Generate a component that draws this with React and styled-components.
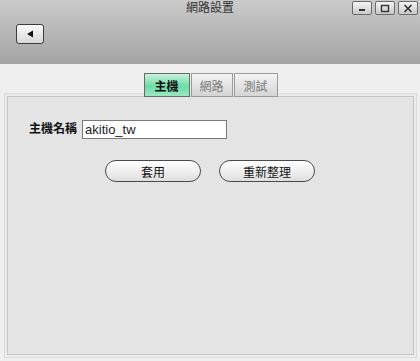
import styled, { createGlobalStyle } from "styled-components";

const Global = createGlobalStyle`
  html, body { margin: 0; padding: 0; background: #efefef; }
  body { font-family: "Liberation Sans", "Noto Sans CJK TC", sans-serif; }
`;

const cjk = `"Liberation Sans", "Noto Sans CJK TC", sans-serif`;

const Window = styled.div`
  width: 420px;
  height: 361px;
  display: flex;
  flex-direction: column;
  background: #efefef;
  overflow: hidden;
`;

const Header = styled.div`
  height: 64px;
  box-sizing: border-box;
  background: linear-gradient(#cbcbcb, #a3a3a3);
  padding: 1px 2px 0 16px;
  display: flex;
  flex-direction: column;
`;

const TitleBar = styled.div`
  display: grid;
  grid-template-columns: 1fr auto 1fr;
  align-items: start;
  height: 23px;
`;

const Title = styled.div`
  grid-column: 2;
  font-family: ${cjk};
  font-size: 12px;
  line-height: 14px;
  color: #333;
  padding-right: 14px;
`;

const Controls = styled.div`
  grid-column: 3;
  justify-self: end;
  display: flex;
  gap: 3px;
`;

const WinBtn = styled.div`
  width: 20px;
  height: 14px;
  box-sizing: border-box;
  border: 1px solid #6a6a6a;
  border-radius: 2px;
  background: linear-gradient(#f4f4f4, #c9c9c9);
  display: flex;
  align-items: center;
  justify-content: center;
`;

const BackBtn = styled.div`
  width: 28px;
  height: 20px;
  box-sizing: border-box;
  border: 1px solid #3c3c3c;
  border-radius: 3px;
  background: linear-gradient(#fafafa, #d8d8d8);
  display: flex;
  align-items: center;
  justify-content: center;
`;

const Body = styled.div`
  flex: 1;
  display: flex;
  flex-direction: column;
  padding: 9px 6px 6px 7px;
`;

const Tabs = styled.div`
  display: flex;
  justify-content: center;
  gap: 1px;
  margin-bottom: -1px;
  position: relative;
  z-index: 1;
`;

const Tab = styled.div`
  height: 24px;
  width: ${(p) => p.$w}px;
  box-sizing: border-box;
  border: 1px solid ${(p) => (p.$active ? "#6a6a6a" : "#9a9a9a")};
  background: ${(p) =>
    p.$active
      ? "linear-gradient(#c9f3dd, #6edba8 55%, #9be8c3)"
      : "linear-gradient(#f4f4f4, #d4d4d4)"};
  font-family: ${cjk};
  font-size: 12px;
  font-weight: ${(p) => (p.$active ? "bold" : "normal")};
  color: ${(p) => (p.$active ? "#111" : "#7a7a7a")};
  display: flex;
  align-items: center;
  justify-content: center;
`;

const Panel = styled.div`
  flex: 1;
  border: 1px solid #c4c4c4;
  background: #e4e4e4;
  box-shadow: 0 0 0 2px #ececec, 0 0 0 3px #dadada;
  padding: 23px 0 0 21px;
  display: flex;
  flex-direction: column;
`;

const FieldRow = styled.div`
  display: flex;
  align-items: center;
  gap: 5px;
`;

const Label = styled.div`
  font-family: ${cjk};
  font-size: 12px;
  font-weight: bold;
  color: #111;
  margin-top: -4px;
`;

const Input = styled.div`
  width: 145px;
  height: 19px;
  box-sizing: border-box;
  border: 1px solid #7a7a7a;
  background: #fff;
  font-family: "Liberation Sans", sans-serif;
  font-size: 13px;
  color: #222;
  padding-left: 2px;
  line-height: 17px;
`;

const Buttons = styled.div`
  display: flex;
  gap: 18px;
  margin: 21px 0 0 76px;
`;

const PillBtn = styled.div`
  width: 96px;
  height: 22px;
  box-sizing: border-box;
  border: 1px solid #4a4a4a;
  border-radius: 11px;
  background: linear-gradient(#ffffff, #f0f0f0 50%, #dedede);
  font-family: ${cjk};
  font-size: 12px;
  color: #111;
  display: flex;
  align-items: center;
  justify-content: center;
`;

export default function App() {
  return (
    <Window>
      <Global />
      <Header>
        <TitleBar>
          <Title>網路設置</Title>
          <Controls>
            <WinBtn>
              <svg width="10" height="8" viewBox="0 0 10 8">
                <rect x="2" y="5" width="6" height="2" fill="#333" />
              </svg>
            </WinBtn>
            <WinBtn>
              <svg width="10" height="9" viewBox="0 0 10 9">
                <rect x="1.5" y="1.5" width="7" height="6" fill="none" stroke="#333" strokeWidth="1.4" />
              </svg>
            </WinBtn>
            <WinBtn>
              <svg width="10" height="9" viewBox="0 0 10 9">
                <path d="M1.5 1 L8.5 8 M8.5 1 L1.5 8" stroke="#333" strokeWidth="1.6" />
              </svg>
            </WinBtn>
          </Controls>
        </TitleBar>
        <BackBtn>
          <svg width="8" height="8" viewBox="0 0 8 8">
            <path d="M7 0.5 L7 7.5 L1 4 Z" fill="#111" />
          </svg>
        </BackBtn>
      </Header>
      <Body>
        <Tabs>
          <Tab $active $w={46}>主機</Tab>
          <Tab $w={42}>網路</Tab>
          <Tab $w={44}>測試</Tab>
        </Tabs>
        <Panel>
          <FieldRow>
            <Label>主機名稱</Label>
            <Input>akitio_tw</Input>
          </FieldRow>
          <Buttons>
            <PillBtn>套用</PillBtn>
            <PillBtn>重新整理</PillBtn>
          </Buttons>
        </Panel>
      </Body>
    </Window>
  );
}
